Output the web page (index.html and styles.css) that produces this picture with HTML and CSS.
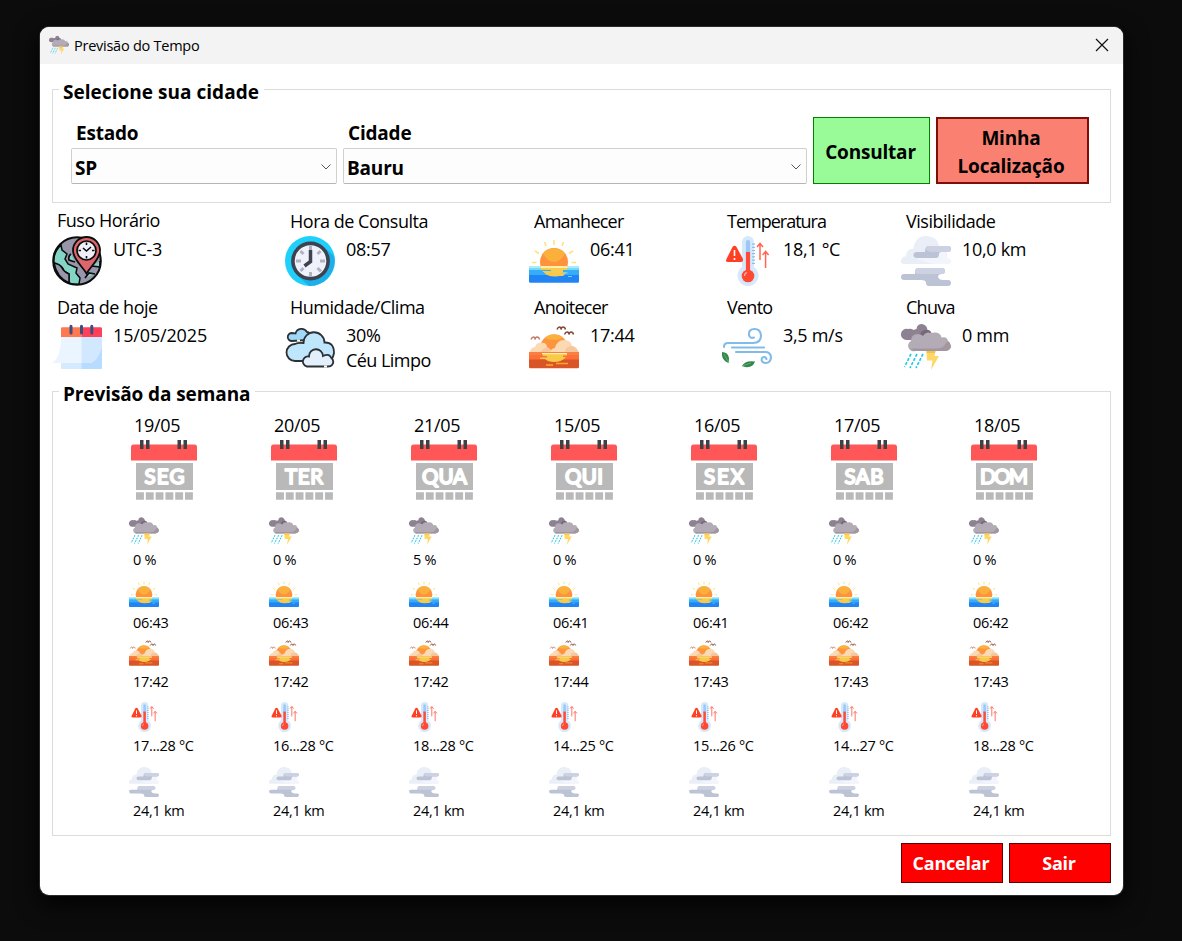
FILE: index.html
```html
<!DOCTYPE html>
<html lang="pt-BR">
<head>
<meta charset="utf-8">
<title>Previsão do Tempo</title>
<link rel="stylesheet" href="styles.css">
</head>
<body>
<svg class="sprite" aria-hidden="true">
  <symbol id="globe" viewBox="0 0 50 50">
    <circle cx="25" cy="25" r="23.8" fill="#9796ab"/>
    <path d="M9 9C4 14 1 20 2 27L7 29Q11 31 12 35L17 38V47Q21 49 27 48L28 42L24 37L25 32L16 28L13 23L15 18L10 14Z" fill="#83d6c5" stroke="#0c0c0c" stroke-width="1.5"/>
    <path d="M2 27Q8 28 10 32T17 38V47Q5 42 2 27Z" fill="#9796ab" stroke="#0c0c0c" stroke-width="1.500"/>
    <path d="M19 18Q16 20 17 24L23 26M40 30L48 31V25M33 42L37 37L43 38" fill="#83d6c5" stroke="#0c0c0c" stroke-width="1.7"/>
    <circle cx="25" cy="25" r="23.8" fill="none" stroke="#0c0c0c" stroke-width="2"/>
    <path d="M34.500 37.500C30 30 21 23 21 14.500A13.500 13.500 0 0 1 48 14.500C48 23 39 30 34.500 37.500Z" fill="#dc666c" stroke="#0c0c0c" stroke-width="1.800"/>
    <circle cx="34.500" cy="14.500" r="9.500" fill="#f0eff7" stroke="#0c0c0c" stroke-width="1.700"/>
    <path d="M31 12L34.500 15L39 11M34.500 6.500V9M34.500 20V22.500M26.500 14.500H29M40 14.500H42.500" fill="none" stroke="#0c0c0c" stroke-width="1.600"/>
  </symbol>
  <symbol id="calendar" viewBox="0 0 50 50">
    <path d="M9 14H50V46Q50 47 49 47H10Q9 47 9 46Z" fill="#b8dcff"/>
    <path d="M9 14H29.500V47H10Q9 47 9 46Z" fill="#d4eaff"/>
    <path d="M9 14H50V24Q47 35 42 39Q40 41 36 41H0Q9 36 9 14Z" fill="#eaf5ff"/>
    <path d="M29.500 14H50V24Q47 35 42 39Q40 41 36 41H29.500Z" fill="#d2e8ff"/>
    <path d="M9 15V6.500Q9 5.300 10.500 5.300H29.500V15Z" fill="#ff7850"/>
    <path d="M29.500 15V5.300H48.500Q50 5.300 50 6.500V15Z" fill="#ff4059"/>
    <path d="M19 4.200V11M29.500 4.200V11M39.800 4.200V11" stroke="#3f4c7d" stroke-width="3" stroke-linecap="round"/>
  </symbol>
  <symbol id="clock" viewBox="0 0 50 50">
    <circle cx="25" cy="25" r="25" fill="#1fd0fb"/>
    <path d="M40 12L49 20A25 25 0 0 1 24 50L12 39Z" fill="#1eaeea"/>
    <circle cx="25.500" cy="25" r="17.600" fill="#eff2fb" stroke="#3d434f" stroke-width="3.600"/>
    <path d="M25.500 9V14M25.500 36V41M11 25H16M35 25H40M15.500 15L18.500 18M32.500 32L36 35.500M35.500 15L32.500 18M15.500 35L18.500 32" stroke="#afb3c4" stroke-width="3"/>
    <path d="M25.500 14V25.500L19.500 30" fill="none" stroke="#3d434f" stroke-width="3.500"/>
  </symbol>
  <symbol id="clouds" viewBox="0 0 50 50">
    <g stroke="#2d3035" stroke-width="1.800" stroke-linecap="round">
      <path d="M7 19A4 4 0 0 1 6.500 11Q9 11 10.500 11.500A6.300 6.300 0 0 1 22 10Q24.500 10 25 13L23 18Z" fill="#9ed9f7"/>
      <path d="M10 39A8.500 8.500 0 1 1 10 22Q13 20.500 18.500 21A10.500 10.500 0 0 1 39.500 20.500Q49 20 49 31Q48 38 42 39Z" fill="#bee6fc"/>
      <path d="M22 44.500A4.800 4.800 0 1 1 24 34.500A7 7 0 0 1 38 34Q44 31 46 35.500Q50 39 47 43Q46 44.500 43 44.500Z" fill="#e1f0fa"/>
    </g>
    <path d="M12 18.500H15M39 44.500H42" stroke="#fff" stroke-width="2.200"/>
  </symbol>
  <symbol id="sunrise" viewBox="0 0 50 50">
    <circle cx="25" cy="26" r="14" fill="#ff933d"/>
    <path d="M14 17.500A14 14 0 0 1 36 17.500Q31 26 25 26T14 17.500Z" fill="#fbb03b"/>
    <path d="M0 30H50V45.500Q50 46.700 48.500 46.700H1.500Q0 46.700 0 45.500Z" fill="#2084f5"/>
    <path d="M0 30H50V39H0Z" fill="#37adfa"/><path d="M0 30H50V34H0Z" fill="#70dbf7"/><path d="M0 30H50V32H0Z" fill="#acebfb"/>
    <path d="M11.500 30H38.500L38 34H34V36H38Q36 38 34 40H29V38.500H18L13 35H22V34H12Z" fill="#f7cb4d"/>
    <path d="M11.500 30H38.500V32H12Z" fill="#fff0a8"/><path d="M15 37.500H36Q31 41 25 40.500Q19 40 15 37.500Z" fill="#f7c84b"/>
    <path d="M33 37H39M39 40.500H43" stroke="#6dcffa" stroke-width="1"/>
    <path d="M25 4V9M15.500 6L17 10M34.500 6L33 10M6 15L10 17.500M44 15L40 17.500M3 26.500H7.500M42.500 26.500H47" stroke="#ffe182" stroke-width="1.600"/>
  </symbol>
  <symbol id="sunset" viewBox="0 0 50 50">
    <circle cx="25" cy="26.500" r="14" fill="#ff943f"/>
    <path d="M15.500 16A14 14 0 0 1 34 15.500Q30 18 25 18T15.500 16Z" fill="#fbb13b"/>
    <path d="M0 31Q2 25 6 25Q8 20 12 21Q17 20 18 25Q22 27 23 31Z" fill="#fbd9b3"/>
    <path d="M10 31Q15 26 18 25Q21 27 23 31Z" fill="#f6c79c"/>
    <path d="M20 31Q23 26 26 26Q28 18 35 18Q42 18 43 24Q48 25 50 31Z" fill="#fbd9b3"/>
    <path d="M36 31Q36 24 43 24Q48 25 50 31Z" fill="#f6c79c"/>
    <path d="M0 30H50V45Q50 46.200 48.500 46.200H1.500Q0 46.200 0 45Z" fill="#d95427"/>
    <path d="M0 30H50V37.500H0Z" fill="#ff7039"/><path d="M0 30H50V33H0Z" fill="#f78042"/>
    <path d="M13 31H38V33.500H34V35H37Q33 40 25 40Q19 40 16 37H11V35.500H18V34H14Z" fill="#f8ca4a"/>
    <path d="M13 31H38V32.200H13Z" fill="#fff0a8"/>
    <path d="M17 43H24M27 41.500H39" stroke="#fba82e" stroke-width="1.300"/>
    <path d="M28 7.500Q29 5 30.500 5Q32 5 32 7.500Q32.500 5 34 5Q36 5 36.500 7.500M35.500 12.500Q36.500 10 38 10Q40 10 40 12.500Q40.500 10 42 10Q44 10 44.500 12.500" fill="none" stroke="#824936" stroke-width="1.500"/>
    <path d="M2 17.500Q3 15 4.500 15Q6 15 6 17.500Q6.500 15 8 15Q10 15 10.500 17.500" fill="none" stroke="#c57865" stroke-width="1.300"/>
  </symbol>
  <symbol id="thermo" viewBox="0 0 50 50">
    <path d="M20 6A6 6 0 0 1 32 6V31A10.500 10.500 0 1 1 20 31Z" fill="#d4e9fc"/>
    <path d="M26 6V17" stroke="#9bc8f7" stroke-width="4.200" stroke-linecap="round"/>
    <path d="M26 16V38" stroke="#ff4b38" stroke-width="4.200"/><circle cx="26" cy="40" r="6.300" fill="#ff4932"/>
    <path d="M22.500 40Q22.500 37 25 36.500" fill="none" stroke="#ffb5aa" stroke-width="1.200"/>
    <path d="M31.500 7.500V30" stroke="#8dbde9" stroke-width="3" stroke-dasharray="1.200 2"/>
    <path d="M10.500 11Q12.500 8.500 14.500 11L21 23Q21.500 26 19 26H6Q3 26 4.500 23Z" fill="#ff3f24"/>
    <path d="M12.500 14V20M12.500 22V24" stroke="#fff" stroke-width="1.600"/>
    <path d="M38 24V8M35 11L38 7.500L41 11M43.600 32V16M40.600 19L43.600 15.500L46.600 19" fill="none" stroke="#ff6752" stroke-width="1.500"/>
  </symbol>
  <symbol id="wind" viewBox="0 0 50 50">
    <path d="M2 25Q2 21 6 21H31Q39 21 39 13.500Q38.500 7 32.500 7Q26.500 7 27 13Q28 17 32 15.500M10 25.500H42M14 30H43Q49 30 49 36Q48 41.500 43 41Q38.500 40 40 36Q43 33.500 44.500 37" fill="none" stroke="#80bbea" stroke-width="2.100" stroke-linecap="round"/>
    <path d="M0 30Q6 30 7 36Q7 38 6.500 41Q-1 38 0 30ZM20 44Q23 38 33 39.500Q31 46 23 45Z" fill="#32894b"/>
    <path d="M2 32L7 41M20 44L29 41" stroke="#73b57a" stroke-width=".7"/>
  </symbol>
  <symbol id="fog" viewBox="0 0 50 50">
    <path d="M3 28Q-1 28 0 24Q1 21 5 20Q5 13 12.500 12.500Q14 0 25 0Q36 0 38 10Q47 14 46 22Q50 23 50 26Q49 28 46 28Z" fill="#e9eef7"/>
    <path d="M16 18.700H31Q37 18.700 38 15H43Q45 17 46 22Q50 23 50 26Q49 28 46 28H34Q26 27 16 23Z" fill="#f2f5fb"/>
    <path d="M27.500 10H47Q50 10 50 13Q50 16 47 16H40Q38 16 38 18Q38 22 35 22H16Q12.500 22 12.500 19Q12.500 16 16 16H24Q24 10 27.500 10ZM17 32H41Q44 32 44 35Q44 38 41 38Q37 38 37 41Q38 44 42 44H47Q50 44 50 47Q50 50 47 50H28Q25 50 25 47Q25 44 20 44H3Q0 44 0 41Q0 38 3 38H14Q14 32 17 32Z" fill="#bcc3d4"/>
    <path d="M28 10H47Q50 10 50 13Q50 16 47 16H31Q26 16 25 13Q25 10 28 10ZM17 32H41Q44 32 44 35Q44 38 41 38H18Q14 38 14 35Q14 32 17 32Z" fill="#ccd2e1"/>
  </symbol>
  <symbol id="rain" viewBox="0 0 50 50">
    <path d="M5.500 18A5.600 5.600 0 1 1 7 7Q10 6 12.500 8Q15 7 15.500 7Q16 2 21 2Q26 3 26.500 8Q30 8 30 13L24 18Z" fill="#8e8292"/>
    <path d="M14 18Q13 13 19 12Q22 7 27 8Q31 9 31 14L24 18Z" fill="#766a7a"/>
    <path d="M14.500 29A5.500 5.500 0 0 1 10 19Q10 12 17 12Q20 12 22 14Q25 9 30 11Q39 9 40.500 15.500Q46 14 47 19Q51 22 49.500 26Q48 29 44 29Z" fill="#b3abb5"/>
    <path d="M47 19Q51 22 49.500 26Q48 29 44 29H14Q11 29 9.800 26.500H35Q40 27 43 24Q44 22 47 19Z" fill="#a3979f"/>
    <path d="M10 32L3.500 45M16 32L9 46M22 32L15 46" stroke="#27c8e8" stroke-width="1.700" stroke-dasharray="3 1.600"/>
    <path d="M25.500 29H34.500L33.500 34H38L30 48L31.500 38.500H26Z" fill="#ffd766"/><path d="M25.500 29H34.500L34 31H25.500Z" fill="#f2c24e"/>
  </symbol>
  <symbol id="day" viewBox="0 0 66 60">
    <path d="M0 20.500V7Q0 4.500 2.500 4.500H63.500Q66 4.500 66 7V20.500Z" fill="#ff5757"/>
    <path d="M9 0H12.500V9H9ZM15 0H18.500V9H15ZM46.500 0H50V9H46.500ZM52.500 0H56V9H52.500Z" fill="#404145"/>
    <path d="M5 23H62V50H5Z" fill="#b9b9b9"/>
    <path d="M5 56H62" stroke="#b9b9b9" stroke-width="7.500" stroke-dasharray="7.900 1.900"/>
  </symbol>
</svg>

<main class="window">
  <header class="titlebar">
    <svg class="app-icon"><use href="#rain"/></svg>
    <h1 class="title">Previsão do Tempo</h1>
    <svg class="close" viewBox="0 0 14 14"><path d="M1 1L13 13M13 1L1 13"/></svg>
  </header>
  <div class="content">
    <section class="group search">
      <h2 class="legend">Selecione sua cidade</h2>
      <div class="field state"><span class="field-label">Estado</span><div class="select"><span>SP</span><svg class="chevron" viewBox="0 0 10 6"><path d="M.5 .5L5 5L9.500 .5"/></svg></div></div>
      <div class="field city"><span class="field-label">Cidade</span><div class="select"><span>Bauru</span><svg class="chevron" viewBox="0 0 10 6"><path d="M.5 .5L5 5L9.500 .5"/></svg></div></div>
      <button class="btn consult">Consultar</button>
      <button class="btn locate">Minha<br>Localização</button>
    </section>

    <section class="current">
      <div class="info first"><div class="label">Fuso Horário</div><div class="reading"><svg class="icon"><use href="#globe"/></svg><div class="value">UTC-3</div></div></div>
      <div class="info"><div class="label">Hora de Consulta</div><div class="reading"><svg class="icon"><use href="#clock"/></svg><div class="value">08:57</div></div></div>
      <div class="info"><div class="label tight">Amanhecer</div><div class="reading"><svg class="icon"><use href="#sunrise"/></svg><div class="value">06:41</div></div></div>
      <div class="info"><div class="label tighter">Temperatura</div><div class="reading"><svg class="icon"><use href="#thermo"/></svg><div class="value">18,1 °C</div></div></div>
      <div class="info"><div class="label">Visibilidade</div><div class="reading"><svg class="icon"><use href="#fog"/></svg><div class="value">10,0 km</div></div></div>
      <div class="info"><div class="label">Data de hoje</div><div class="reading"><svg class="icon"><use href="#calendar"/></svg><div class="value wide">15/05/2025</div></div></div>
      <div class="info"><div class="label">Humidade/Clima</div><div class="reading"><svg class="icon"><use href="#clouds"/></svg><div class="value">30%<br><span class="sky">Céu Limpo</span></div></div></div>
      <div class="info"><div class="label tight">Anoitecer</div><div class="reading"><svg class="icon"><use href="#sunset"/></svg><div class="value">17:44</div></div></div>
      <div class="info"><div class="label tight">Vento</div><div class="reading"><svg class="icon"><use href="#wind"/></svg><div class="value">3,5 m/s</div></div></div>
      <div class="info"><div class="label tight">Chuva</div><div class="reading"><svg class="icon"><use href="#rain"/></svg><div class="value">0 mm</div></div></div>
    </section>

    <section class="group week">
      <h2 class="legend">Previsão da semana</h2>
      <article class="day">
        <div class="date">19/05</div><svg class="day-icon"><use href="#day"/><text x="13.500" y="44" textLength="40">SEG</text></svg>
        <svg class="mini rain"><use href="#rain"/></svg><div class="stat">0 %</div>
        <svg class="mini rise"><use href="#sunrise"/></svg><div class="stat">06:43</div>
        <svg class="mini set"><use href="#sunset"/></svg><div class="stat">17:42</div>
        <svg class="mini temp"><use href="#thermo"/></svg><div class="stat">17...28 °C</div>
        <svg class="mini fog"><use href="#fog"/></svg><div class="stat">24,1 km</div>
      </article>
      <article class="day">
        <div class="date">20/05</div><svg class="day-icon"><use href="#day"/><text x="14" y="44" textLength="38">TER</text></svg>
        <svg class="mini rain"><use href="#rain"/></svg><div class="stat">0 %</div>
        <svg class="mini rise"><use href="#sunrise"/></svg><div class="stat">06:43</div>
        <svg class="mini set"><use href="#sunset"/></svg><div class="stat">17:42</div>
        <svg class="mini temp"><use href="#thermo"/></svg><div class="stat">16...28 °C</div>
        <svg class="mini fog"><use href="#fog"/></svg><div class="stat">24,1 km</div>
      </article>
      <article class="day">
        <div class="date">21/05</div><svg class="day-icon"><use href="#day"/><text x="11" y="44" textLength="45">QUA</text></svg>
        <svg class="mini rain"><use href="#rain"/></svg><div class="stat">5 %</div>
        <svg class="mini rise"><use href="#sunrise"/></svg><div class="stat">06:44</div>
        <svg class="mini set"><use href="#sunset"/></svg><div class="stat">17:42</div>
        <svg class="mini temp"><use href="#thermo"/></svg><div class="stat">18...28 °C</div>
        <svg class="mini fog"><use href="#fog"/></svg><div class="stat">24,1 km</div>
      </article>
      <article class="day">
        <div class="date">15/05</div><svg class="day-icon"><use href="#day"/><text x="14" y="44" textLength="38">QUI</text></svg>
        <svg class="mini rain"><use href="#rain"/></svg><div class="stat">0 %</div>
        <svg class="mini rise"><use href="#sunrise"/></svg><div class="stat">06:41</div>
        <svg class="mini set"><use href="#sunset"/></svg><div class="stat">17:44</div>
        <svg class="mini temp"><use href="#thermo"/></svg><div class="stat">14...25 °C</div>
        <svg class="mini fog"><use href="#fog"/></svg><div class="stat">24,1 km</div>
      </article>
      <article class="day">
        <div class="date">16/05</div><svg class="day-icon"><use href="#day"/><text x="13" y="44" textLength="40">SEX</text></svg>
        <svg class="mini rain"><use href="#rain"/></svg><div class="stat">0 %</div>
        <svg class="mini rise"><use href="#sunrise"/></svg><div class="stat">06:41</div>
        <svg class="mini set"><use href="#sunset"/></svg><div class="stat">17:43</div>
        <svg class="mini temp"><use href="#thermo"/></svg><div class="stat">15...26 °C</div>
        <svg class="mini fog"><use href="#fog"/></svg><div class="stat">24,1 km</div>
      </article>
      <article class="day">
        <div class="date">17/05</div><svg class="day-icon"><use href="#day"/><text x="13.500" y="44" textLength="39">SAB</text></svg>
        <svg class="mini rain"><use href="#rain"/></svg><div class="stat">0 %</div>
        <svg class="mini rise"><use href="#sunrise"/></svg><div class="stat">06:42</div>
        <svg class="mini set"><use href="#sunset"/></svg><div class="stat">17:43</div>
        <svg class="mini temp"><use href="#thermo"/></svg><div class="stat">14...27 °C</div>
        <svg class="mini fog"><use href="#fog"/></svg><div class="stat">24,1 km</div>
      </article>
      <article class="day">
        <div class="date">18/05</div><svg class="day-icon"><use href="#day"/><text x="9" y="44" textLength="48">DOM</text></svg>
        <svg class="mini rain"><use href="#rain"/></svg><div class="stat">0 %</div>
        <svg class="mini rise"><use href="#sunrise"/></svg><div class="stat">06:42</div>
        <svg class="mini set"><use href="#sunset"/></svg><div class="stat">17:43</div>
        <svg class="mini temp"><use href="#thermo"/></svg><div class="stat">18...28 °C</div>
        <svg class="mini fog"><use href="#fog"/></svg><div class="stat">24,1 km</div>
      </article>
    </section>

    <footer class="actions"><button class="btn danger">Cancelar</button><button class="btn danger">Sair</button></footer>
  </div>
</main>
</body>
</html>
```
FILE: styles.css
```css
* { box-sizing: border-box; }
body {
  margin: 0;
  height: 941px;
  padding: 27px 59px 46px 40px;
  overflow: hidden;
  background: #0c0c0c;
  font-family: "Open Sans", "Noto Sans", sans-serif;
  color: #000;
}
svg { display: block; flex: none; }
.sprite { position: absolute; width: 0; height: 0; }
.window {
  height: 868px;
  background: #fff;
  border-radius: 9px;
  overflow: hidden;
  box-shadow: 0 0 0 1px #2b2b2b, 0 8px 24px #000;
}
.titlebar {
  display: flex;
  align-items: center;
  height: 37px;
  padding: 0 14px 1px 9px;
  background: #f3f3f3;
}
.app-icon { width: 20px; height: 20px; }
.title { flex: 1; margin: 0 0 0 5px; font-size: 14.5px; font-weight: 400; letter-spacing: -.25px; }
.close { width: 14px; height: 14px; fill: none; stroke: #111; stroke-width: 1.2; }
.content { padding: 25px 12px 0; }
.group { position: relative; border: 1px solid #dcdcdc; }
.legend {
  position: absolute;
  left: 6px;
  top: -12px;
  margin: 0;
  padding: 0 5px 0 4px;
  background: #fff;
  font-size: 19px;
  font-weight: 700;
  line-height: 28px;
  letter-spacing: .03px;
  white-space: nowrap;
}
.week .legend { letter-spacing: -.1px; }
.search { display: flex; gap: 6px; height: 114px; padding: 27px 0 0 18px; }
.field { display: flex; flex-direction: column; height: 67px; font-size: 19px; font-weight: 700; letter-spacing: -.2px; }
.state { width: 266px; }
.city { width: 464px; }
.field-label { height: 31px; padding-left: 5px; line-height: 33px; }
.select {
  display: flex;
  align-items: center;
  justify-content: space-between;
  height: 36px;
  padding: 2px 5px 0 3px;
  border: 1px solid #d0d0d0;
  border-bottom-color: #b5b5b5;
  border-radius: 2px;
  background: #fdfdfd;
}
.select span { padding-top: 2px; }
.chevron { width: 10px; height: 6px; margin-bottom: 1px; fill: none; stroke: #555; }
.btn {
  padding: 0;
  font: 700 19px/28px "Open Sans", "Noto Sans", sans-serif;
  letter-spacing: -.2px;
  color: #000;
}
.consult { width: 117px; height: 67px; padding: 2px 2px 0 0; border: 1px solid #008000; background: #98fb98; }
.locate { width: 153px; height: 67px; padding: 2px 3px 0 0; border: 2px solid #7d0f08; background: #fa8072; }
.current {
  display: grid;
  grid-template-columns: 233px 244px 193px 179px 1fr;
  grid-template-rows: 86px 86px;
  margin: 6px 0 10px;
  font-size: 18px;
  letter-spacing: -.3px;
}
.label { height: 27px; padding-left: 5px; line-height: 25px; letter-spacing: -.48px; }
.label.tight { letter-spacing: -.75px; }
.label.tighter { letter-spacing: -1px; }
.first .label { line-height: 23px; }
.reading { display: flex; gap: 11px; }
.icon { width: 50px; height: 50px; }
.value { padding-top: 1px; line-height: 25px; white-space: nowrap; }
.value.wide { letter-spacing: -.15px; }
.sky { letter-spacing: -.55px; }
.week { display: grid; grid-template-columns: repeat(7, 140px); height: 445px; padding: 20px 0 0 76px; }
.date { height: 28px; padding-left: 5px; font-size: 18px; line-height: 26px; letter-spacing: -.3px; }
.day-icon { width: 66px; height: 60px; margin-left: 2px; }
.day-icon text {
  font: 400 20.5px "Lato", "Open Sans", sans-serif;
  fill: #fff;
  stroke: #fff;
  stroke-width: 1.9px;
  stroke-linejoin: round;
  stroke-linecap: round;
}
.mini { width: 30px; height: 30px; }
.mini.rain { margin-top: 16px; }
.mini.rise { margin-top: 7px; }
.mini.set { margin-top: 3px; }
.mini.temp { margin-top: 8px; }
.mini.fog { margin-top: 9px; }
.stat { height: 26px; padding-left: 4px; font-size: 14.5px; line-height: 27px; letter-spacing: -.3px; white-space: nowrap; }
.actions { display: flex; justify-content: flex-end; gap: 6px; margin-top: 7px; }
.danger { width: 102px; height: 40px; padding-right: 2px; border: 1px solid #600000; background: #f00; color: #fff; font-size: 18px; }
```
